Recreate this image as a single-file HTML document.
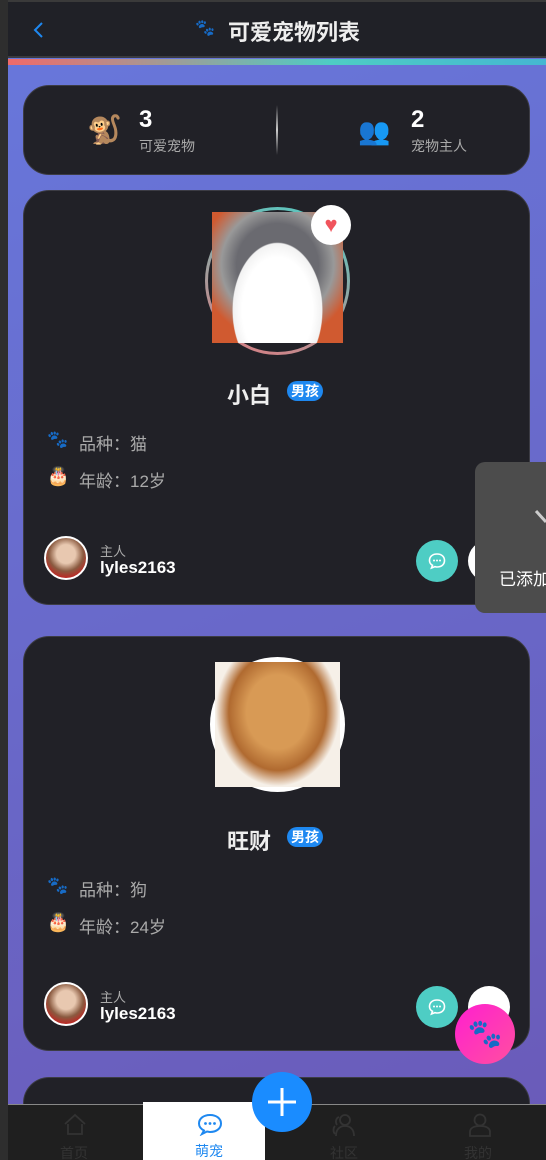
<!DOCTYPE html><html><head><meta charset="utf-8"><style>
*{margin:0;padding:0;box-sizing:border-box}
html{width:546px;height:1160px;overflow:hidden}
body{width:546px;height:1160px;overflow:hidden;position:relative;font-family:"Liberation Sans","Noto Sans CJK SC",sans-serif;background:linear-gradient(160deg,#6878dc,#6a5ab8);}
.abs{position:absolute}
.strip{left:0;top:0;width:8px;height:1160px;background:#2e2e2e}
.hdr{left:8px;top:0;width:538px;height:58px;background:#202127;border-top:2px solid #3a3a3a;border-bottom:2px solid #3a3b40}
.bar{left:8px;top:59px;width:538px;height:6px;background:linear-gradient(90deg,#f06a6a,#4ecdc4 60%,#45b7d1)}
.card{left:23px;width:507px;background:#212127;border:1px solid #3c3c44;border-radius:26px}
.lbl{color:#aaa;font-size:17px}
.ava{width:44px;height:44px;border-radius:50%;border:2px solid #fff;background:radial-gradient(circle at 50% 40%,#e8c8b0 30%,#8a5a40 55%,#c42020 80%)}
.bub{width:42px;height:42px;border-radius:50%;background:#4ecdc4}
.tag{background:#1e88f0;color:#fff;font-size:14px;font-weight:bold;border-radius:10px;padding:1px 4px;line-height:18px}
</style></head><body>
<div class="abs strip"></div>
<div class="abs hdr"></div>
<svg class="abs" style="left:31px;top:20px" width="14" height="20"><path d="M11 3 L4 10 L11 17" stroke="#1e88f0" stroke-width="2" fill="none"/></svg>
<div class="abs" style="left:195px;top:18px;font-size:16px">🐾</div>
<div class="abs" style="left:228px;top:15px;color:#eee;font-size:22px;font-weight:bold">可爱宠物列表</div>
<div class="abs bar"></div>

<div class="abs card" style="top:85px;height:90px"></div>
<div class="abs" style="left:87px;top:113px;font-size:28px">🐒</div>
<div class="abs" style="left:139px;top:106px;color:#fff;font-size:24px;font-weight:bold">3</div>
<div class="abs" style="left:139px;top:136px;color:#aaa;font-size:14px">可爱宠物</div>
<div class="abs" style="left:276px;top:105px;width:2px;height:50px;background:linear-gradient(#212127,#ccc,#212127)"></div>
<div class="abs" style="left:358px;top:116px;font-size:26px">👥</div>
<div class="abs" style="left:411px;top:106px;color:#fff;font-size:24px;font-weight:bold">2</div>
<div class="abs" style="left:411px;top:136px;color:#aaa;font-size:14px">宠物主人</div>

<div class="abs card" style="top:190px;height:415px"></div>
<div class="abs" style="left:205px;top:207px;width:145px;height:148px;border-radius:50%;background:linear-gradient(200deg,#4ecdc4,#e07a80)"></div>
<div class="abs" style="left:208px;top:210px;width:139px;height:142px;border-radius:50%;background:#212127"></div>
<div class="abs" style="left:212px;top:212px;width:131px;height:131px;background:radial-gradient(ellipse at 50% 75%,#fff 38%,#f2f2f2 48%,transparent 49%),radial-gradient(circle at 50% 40%,#6a6a70 40%,#999 55%,#d05a30 75%)"></div>
<div class="abs" style="left:311px;top:205px;width:40px;height:40px;border-radius:50%;background:#fff;color:#f0545c;font-size:22px;text-align:center;line-height:40px">♥</div>
<div class="abs" style="left:227px;top:378px;color:#eee;font-size:22px;font-weight:bold">小白</div>
<div class="abs tag" style="left:287px;top:381px">男孩</div>
<div class="abs" style="left:47px;top:430px;font-size:17px">🐾</div>
<div class="abs lbl" style="left:79px;top:430px">品种：猫</div>
<div class="abs" style="left:47px;top:466px;font-size:18px">🎂</div>
<div class="abs lbl" style="left:79px;top:467px">年龄：12岁</div>
<div class="abs ava" style="left:44px;top:536px"></div>
<div class="abs" style="left:100px;top:541px;color:#aaa;font-size:13px">主人</div>
<div class="abs" style="left:100px;top:558px;color:#fff;font-size:17px;font-weight:bold">lyles2163</div>
<div class="abs bub" style="left:416px;top:540px"></div>
<svg class="abs" style="left:427px;top:551px" width="20" height="20"><path d="M10 3C5 3 2.5 6 2.5 9.5C2.5 12 4 13.5 5.5 14.3L4.5 17L8 15.6C8.6 15.8 9.3 16 10 16C15 16 17.5 13 17.5 9.5C17.5 6 15 3 10 3Z" stroke="#fff" stroke-width="1.6" fill="none"/><circle cx="7" cy="9.5" r="1" fill="#fff"/><circle cx="10" cy="9.5" r="1" fill="#fff"/><circle cx="13" cy="9.5" r="1" fill="#fff"/></svg>
<div class="abs" style="left:468px;top:540px;width:42px;height:42px;border-radius:50%;background:#fff"></div>

<div class="abs card" style="top:636px;height:415px"></div>
<div class="abs" style="left:210px;top:657px;width:135px;height:135px;border-radius:50%;background:#fff"></div>
<div class="abs" style="left:215px;top:662px;width:125px;height:125px;background:radial-gradient(ellipse at 50% 40%,#d89a55 35%,#b06a30 55%,#f6f0e8 70%)"></div>
<div class="abs" style="left:227px;top:824px;color:#eee;font-size:22px;font-weight:bold">旺财</div>
<div class="abs tag" style="left:287px;top:827px">男孩</div>
<div class="abs" style="left:47px;top:876px;font-size:17px">🐾</div>
<div class="abs lbl" style="left:79px;top:876px">品种：狗</div>
<div class="abs" style="left:47px;top:912px;font-size:18px">🎂</div>
<div class="abs lbl" style="left:79px;top:913px">年龄：24岁</div>
<div class="abs ava" style="left:44px;top:982px"></div>
<div class="abs" style="left:100px;top:987px;color:#aaa;font-size:13px">主人</div>
<div class="abs" style="left:100px;top:1004px;color:#fff;font-size:17px;font-weight:bold">lyles2163</div>
<div class="abs bub" style="left:416px;top:986px"></div>
<svg class="abs" style="left:427px;top:997px" width="20" height="20"><path d="M10 3C5 3 2.5 6 2.5 9.5C2.5 12 4 13.5 5.5 14.3L4.5 17L8 15.6C8.6 15.8 9.3 16 10 16C15 16 17.5 13 17.5 9.5C17.5 6 15 3 10 3Z" stroke="#fff" stroke-width="1.6" fill="none"/><circle cx="7" cy="9.5" r="1" fill="#fff"/><circle cx="10" cy="9.5" r="1" fill="#fff"/><circle cx="13" cy="9.5" r="1" fill="#fff"/></svg>
<div class="abs" style="left:468px;top:986px;width:42px;height:42px;border-radius:50%;background:#fff"></div>

<div class="abs card" style="top:1077px;height:83px;border-bottom:none;border-radius:26px 26px 0 0"></div>

<div class="abs" style="left:475px;top:462px;width:71px;height:151px;border-radius:10px 0 0 10px;background:#4c4c4c"></div>
<svg class="abs" style="left:534px;top:508px" width="12" height="20"><path d="M2 3 L12 14" stroke="#ccc" stroke-width="3"/></svg>
<div class="abs" style="left:499px;top:565px;color:#fff;font-size:17px;white-space:nowrap">已添加</div>

<div class="abs" style="left:8px;top:1104px;width:538px;height:56px;background:#1f1f1f;border-top:1px solid #888"></div>
<div class="abs" style="left:143px;top:1102px;width:122px;height:58px;background:#fff"></div>
<svg class="abs" style="left:62px;top:1112px" width="26" height="24"><path d="M3 12L13 3L23 12M6 12V22H20V12" stroke="#333" stroke-width="1.8" fill="none"/></svg>
<div class="abs" style="left:60px;top:1143px;color:#333;font-size:14px">首页</div>
<div class="abs" style="left:195px;top:1141px;color:#1e88f0;font-size:14px">萌宠</div>
<svg class="abs" style="left:196px;top:1112px" width="28" height="24"><path d="M14 3 C7 3 3 7 3 11.5 C3 15 5 17 8 18.5 L6 22 L11 19.5 C12 19.7 13 20 14 20 C21 20 25 16 25 11.5 C25 7 21 3 14 3Z" stroke="#1e88f0" stroke-width="2" fill="none"/><circle cx="9.5" cy="11.5" r="1.4" fill="#1e88f0"/><circle cx="14" cy="11.5" r="1.4" fill="#1e88f0"/><circle cx="18.5" cy="11.5" r="1.4" fill="#1e88f0"/></svg>
<svg class="abs" style="left:330px;top:1112px" width="28" height="26"><circle cx="15" cy="8" r="5" stroke="#333" stroke-width="1.8" fill="none"/><path d="M6 24C6 17 10 14 15 14C20 14 24 17 24 24M9 5C6 6 5 10 7 13M5 22C3 20 3 16 5 14" stroke="#333" stroke-width="1.8" fill="none"/></svg>
<div class="abs" style="left:330px;top:1143px;color:#333;font-size:14px">社区</div>
<svg class="abs" style="left:467px;top:1112px" width="26" height="26"><circle cx="13" cy="8" r="5.5" stroke="#333" stroke-width="1.8" fill="none"/><path d="M3 24V20C3 16 7 14 13 14C19 14 23 16 23 20V24Z" stroke="#333" stroke-width="1.8" fill="none"/></svg>
<div class="abs" style="left:464px;top:1143px;color:#333;font-size:14px">我的</div>
<div class="abs" style="left:252px;top:1072px;width:60px;height:60px;border-radius:50%;background:#1a8cff"></div>
<svg class="abs" style="left:252px;top:1072px" width="60" height="60"><path d="M30 16V44M16 30H44" stroke="#fff" stroke-width="3"/></svg>
<div class="abs" style="left:455px;top:1004px;width:60px;height:60px;border-radius:50%;background:linear-gradient(135deg,#ff1fd0,#ff4fa0);text-align:center;line-height:60px;font-size:28px">🐾</div>
</body></html>
